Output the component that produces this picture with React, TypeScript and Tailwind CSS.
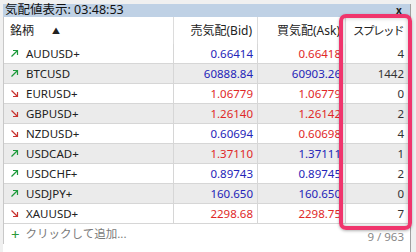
import { Fragment } from 'react';

type Quote = {
  symbol: string;
  up: boolean;
  bid: string;
  ask: string;
  bidUp: boolean;
  askUp: boolean;
  spread: number;
};

const QUOTES: Quote[] = [
  { symbol: 'AUDUSD+', up: true, bid: '0.66414', ask: '0.66418', bidUp: true, askUp: false, spread: 4 },
  { symbol: 'BTCUSD', up: true, bid: '60888.84', ask: '60903.26', bidUp: true, askUp: true, spread: 1442 },
  { symbol: 'EURUSD+', up: false, bid: '1.06779', ask: '1.06779', bidUp: false, askUp: false, spread: 0 },
  { symbol: 'GBPUSD+', up: false, bid: '1.26140', ask: '1.26142', bidUp: false, askUp: false, spread: 2 },
  { symbol: 'NZDUSD+', up: false, bid: '0.60694', ask: '0.60698', bidUp: true, askUp: false, spread: 4 },
  { symbol: 'USDCAD+', up: true, bid: '1.37110', ask: '1.37111', bidUp: false, askUp: true, spread: 1 },
  { symbol: 'USDCHF+', up: true, bid: '0.89743', ask: '0.89745', bidUp: true, askUp: true, spread: 2 },
  { symbol: 'USDJPY+', up: true, bid: '160.650', ask: '160.650', bidUp: true, askUp: true, spread: 0 },
  { symbol: 'XAUUSD+', up: false, bid: '2298.68', ask: '2298.75', bidUp: false, askUp: false, spread: 7 },
];

const FONT = "font-['Noto_Sans','Noto_Sans_CJK_JP',sans-serif]";

function Arrow({ up }: { up: boolean }) {
  const color = up ? '#1e9a3c' : '#c8332f';
  return (
    <svg width="9" height="9" viewBox="0 0 9 9" fill="none" stroke={color} strokeWidth="1.2">
      {up ? (
        <>
          <path d="M1.5 7.5 L7.5 1.5" />
          <path d="M3 1.5 H7.5 V6" />
        </>
      ) : (
        <>
          <path d="M1.5 1.5 L7.5 7.5" />
          <path d="M3 7.5 H7.5 V3" />
        </>
      )}
    </svg>
  );
}

export default function App() {
  return (
    <div className={`relative h-[252px] w-[416px] overflow-hidden bg-[#f0f0f0] ${FONT}`}>
      {/* window frame */}
      <div className="absolute left-[3px] top-[4px] h-[248px] w-[408px] border-r border-[#a0a0a0] bg-white">
        <div className="flex h-[13px] items-center bg-[#bfd1e5] pl-[2px] text-[12.5px] leading-none text-[#111]">
          気配値表示: 03:48:53
        </div>
        <div className="border-l border-[#c8c8c8]">
          <div className="grid h-[27px] grid-cols-[170px_84px_88px_1fr] items-center whitespace-nowrap text-[12px] text-[#222]">
            <div className="flex h-full items-center border-r border-[#dcdcdc] pl-[6px]">
              <span>銘柄</span>
              <span className="ml-[18px] text-[8px]">▲</span>
            </div>
            <div className="flex h-full items-center justify-end border-r border-[#dcdcdc] pr-[5px]">売気配(Bid)</div>
            <div className="flex h-full items-center justify-end border-r border-[#dcdcdc] pr-[5px]">買気配(Ask)</div>
            <div className="flex h-full items-center justify-end pr-[7px] text-[11.5px] tracking-[-1.5px]">スプレッド</div>
          </div>
          <div className="grid grid-cols-[170px_84px_88px_1fr] text-[11.5px]">
            {QUOTES.map((q, i) => {
              const bg = i % 2 === 1 ? 'bg-[#ebebeb]' : 'bg-white';
              const cell = `flex h-[20px] items-center border-b border-[#d6d6d6] ${bg}`;
              return (
                <Fragment key={q.symbol}>
                  <div className={`${cell} gap-[7px] border-r pl-[6px] text-[#222]`}>
                    <Arrow up={q.up} />
                    <span>{q.symbol}</span>
                  </div>
                  <div className={`${cell} justify-end border-r pr-[4px] ${q.bidUp ? 'text-[#2424b8]' : 'text-[#e02828]'}`}>
                    {q.bid}
                  </div>
                  <div className={`${cell} justify-end border-r pr-[4px] ${q.askUp ? 'text-[#2424b8]' : 'text-[#e02828]'}`}>
                    {q.ask}
                  </div>
                  <div className={`${cell} justify-end pr-[6px] text-[#333]`}>{q.spread}</div>
                </Fragment>
              );
            })}
          </div>
          <div className="flex h-[20px] items-center text-[11.5px] text-[#7a7a7a]">
            <span className="ml-[7px] text-[15px] leading-none text-[#2a9a3a]">+</span>
            <span className="ml-[6px]">クリックして追加...</span>
            <span className="ml-auto pr-[6px] pt-[6px] text-[11.5px] text-[#888]">9 / 963</span>
          </div>
        </div>
      </div>
      {/* close button */}
      <span className="absolute left-[396px] top-[5px] text-[10px] font-bold leading-none text-[#222]">x</span>
      {/* highlight box */}
      <div className="absolute left-[339px] top-[14px] h-[216px] w-[73px] rounded-[7px] border-[4px] border-[#f0356d] shadow-[inset_0_0_4px_rgba(0,0,0,0.25),0_1px_3px_rgba(0,0,0,0.3)]" />
    </div>
  );
}
